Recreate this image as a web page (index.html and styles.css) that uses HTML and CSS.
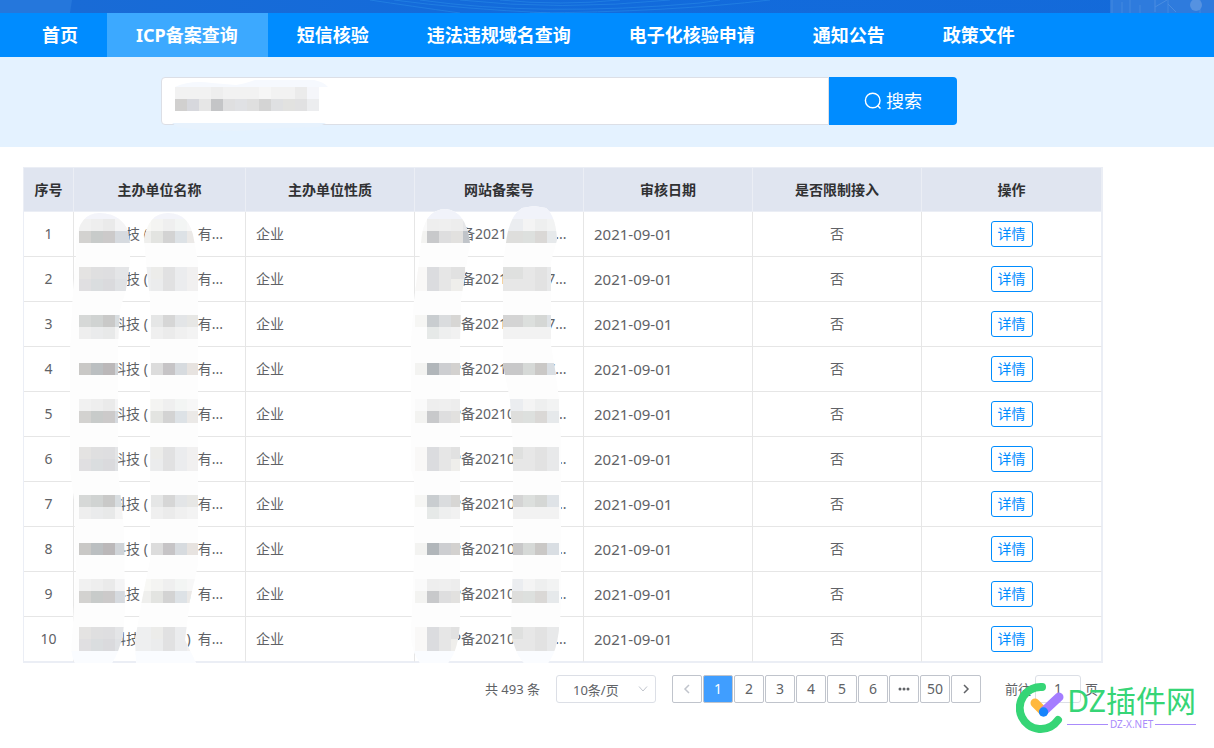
FILE: index.html
```html
<!DOCTYPE html>
<html lang="zh-CN">
<head>
<meta charset="utf-8">
<title>ICP备案查询</title>
<link rel="stylesheet" href="styles.css">
</head>
<body>
<header>
  <div class="banner">
    <svg class="banner-left" width="72" height="13" aria-hidden="true"><path d="M0 0H72L70 13H0Z" fill="#2577dc"/></svg>
    <svg class="banner-waves" width="420" height="13" aria-hidden="true"><g fill="none" stroke="#2a8de8" stroke-opacity=".55"><path d="M0 0Q40 6 90 13"/><path d="M24 0Q90 9 180 13"/><path d="M50 0Q170 17 330 3L350 0"/><path d="M90 0Q190 11 300 0"/><path d="M160 13Q300 12 400 0"/><path d="M130 0Q190 6 250 0"/></g></svg>
    <svg class="banner-right" width="104" height="13" aria-hidden="true"><rect width="104" height="13" fill="#2e7bdd"/><path d="M2 0V13M12 2V13M20 0V13M30 5V13M58 0V13M90 0V13" stroke="#5292e3" stroke-opacity=".6"/><path d="M45 0V12M45 7L57 0M58 4L66 12" stroke="#4a8de1" fill="none"/><circle cx="86" cy="5" r="6" fill="#5592e1"/></svg>
  </div>
  <nav class="nav">
    <a href="#">首页</a>
    <a href="#" class="active" aria-current="page">ICP备案查询</a>
    <a href="#">短信核验</a>
    <a href="#">违法违规域名查询</a>
    <a href="#">电子化核验申请</a>
    <a href="#">通知公告</a>
    <a href="#">政策文件</a>
  </nav>
</header>
<main>
  <form class="search">
    <div class="search-field">
      <input type="text" aria-label="查询内容">
      <svg class="mask search-mask" viewBox="161 77 168 54" width="168" height="54" aria-hidden="true">
        <path d="M175 87Q190 80 212 83L236 85Q244 84 255 80H314Q324 82 328 87Z" fill="#f6f9fe"/>
        <path d="M172 123H326L318 127L280 128L240 131L200 130L177 127Z" fill="#e7f2fd"/>
        <g shape-rendering="crispEdges">
          <path d="M175 87h144v12h-144z" fill="#f2f2f2"/><path d="M211 87h12v12h-12z" fill="#eee"/><path d="M259 87h12v12h-12z" fill="#f6f6f6"/><path d="M295 87h12v12h-12z" fill="#ebebeb"/><path d="M307 87h12v12h-12z" fill="#f5f6fa"/>
          <path d="M175 99h12v12h-12z" fill="#d1d0cf"/><path d="M187 99h12v12h-12z" fill="#d7d8dd"/><path d="M199 99h12v12h-12z" fill="#e6e6e6"/><path d="M211 99h12v12h-12z" fill="#c4c5c7"/><path d="M223 99h12v12h-12z" fill="#dfdfe0"/><path d="M235 99h12v12h-12z" fill="#e0e1e4"/><path d="M247 99h12v12h-12z" fill="#dfdfdf"/><path d="M259 99h12v12h-12z" fill="#d4d4d4"/><path d="M271 99h12v12h-12z" fill="#dfe0e2"/><path d="M283 99h12v12h-12z" fill="#e2e2e0"/><path d="M295 99h12v12h-12z" fill="#e1e1e2"/><path d="M307 99h12v12h-12z" fill="#ecedef"/>
        </g>
      </svg>
    </div>
    <button type="submit" class="search-btn">
      <svg width="18" height="18" viewBox="0 0 18 18" fill="none" stroke="#fff" stroke-width="1.4" aria-hidden="true"><circle cx="8.700" cy="8.500" r="7.300"/><path d="M13.500 13.500L16.500 16.500"/></svg>
      搜索
    </button>
  </form>

  <section class="results">
    <table>
      <colgroup><col class="c-no"><col class="c-name"><col><col><col><col><col class="c-op"></colgroup>
      <thead>
        <tr><th>序号</th><th>主办单位名称</th><th>主办单位性质</th><th>网站备案号</th><th>审核日期</th><th>是否限制接入</th><th>操作</th></tr>
      </thead>
      <tbody>
        <tr><td class="center">1</td>
          <td class="masked">　　科技&nbsp;(　　&ensp;&nbsp;)&ensp;有...
            <svg class="mask name-mask" viewBox="64 206 150 460" width="150" height="460" aria-hidden="true">
              <defs>
                <clipPath id="n1"><path d="M76 240Q80 213 99 213Q118 213 127 228L130 243V262Q128 275 126 290L120 310L118 345V470L121 500L124 530L125 610L123 635Q118 655 112 663H75Q70 655 72 640L76 570L74 500L70 470V350L73 290L76 255Z"/></clipPath>
                <clipPath id="n2"><path d="M144 240Q148 213 168 213Q190 213 194 240L198 262V565L190 600L185 640L196 663H136L135 640L142 600L150 560V300L146 262Z"/></clipPath>
                <g id="p1">
                  <path d="M79 219h12v12h-12z" fill="#f1f1f1"/><path d="M91 219h12v12h-12z" fill="#eee"/><path d="M103 219h12v12h-12z" fill="#eaeaea"/><path d="M115 219h16v12h-16z" fill="#f4f4f5"/>
                  <path d="M79 231h12v12h-12z" fill="#d3d2d0"/><path d="M91 231h12v12h-12z" fill="#c8cbca"/><path d="M103 231h12v12h-12z" fill="#cccaca"/><path d="M115 231h16v12h-16z" fill="#d6dadf"/>
                  <path d="M79 267h12v12h-12z" fill="#e4e3e2"/><path d="M91 267h12v12h-12z" fill="#dfdfe0"/><path d="M103 267h12v12h-12z" fill="#dedee0"/><path d="M115 267h16v12h-16z" fill="#e4e5e7"/>
                  <path d="M79 279h12v12h-12z" fill="#e0dfe1"/><path d="M91 279h12v12h-12z" fill="#dadddf"/><path d="M103 279h12v12h-12z" fill="#dadadd"/><path d="M115 279h16v12h-16z" fill="#e0e2e5"/>
                  <path d="M79 315h12v12h-12z" fill="#d6d8d7"/><path d="M91 315h12v12h-12z" fill="#d0d3d2"/><path d="M103 315h12v12h-12z" fill="#c9c9c8"/><path d="M115 315h16v12h-16z" fill="#d8dde0"/>
                  <path d="M79 327h12v12h-12z" fill="#eee"/><path d="M91 327h12v12h-12z" fill="#eaebec"/><path d="M103 327h12v12h-12z" fill="#e8e9e9"/><path d="M115 327h16v12h-16z" fill="#f4f4f4"/>
                  <path d="M79 363h12v12h-12z" fill="#c9c8c6"/><path d="M91 363h12v12h-12z" fill="#bbbfc1"/><path d="M103 363h12v12h-12z" fill="#bbb8b9"/><path d="M115 363h16v12h-16z" fill="#d0d4d8"/>
                </g>
                <g id="p2">
                  <path d="M135 219h16v12h-16z" fill="#f8f8f5"/><path d="M151 219h12v12h-12z" fill="#f4f4f2"/><path d="M163 219h12v12h-12z" fill="#efefef"/><path d="M175 219h12v12h-12z" fill="#f3f5f4"/><path d="M187 219h12v12h-12z" fill="#f7f7f7"/>
                  <path d="M135 231h16v12h-16z" fill="#efefed"/><path d="M151 231h12v12h-12z" fill="#e3e4e1"/><path d="M163 231h12v12h-12z" fill="#d3d3d3"/><path d="M175 231h12v12h-12z" fill="#dde2e6"/><path d="M187 231h12v12h-12z" fill="#ebe9e7"/>
                  <path d="M135 267h16v24h-16z" fill="#eeeff0"/><path d="M151 267h12v12h-12z" fill="#ececea"/><path d="M163 267h12v24h-12z" fill="#e1e1e2"/><path d="M175 267h12v24h-12z" fill="#ebecee"/><path d="M187 267h12v24h-12z" fill="#f1f0f0"/><path d="M151 279h12v12h-12z" fill="#ebeced"/>
                  <path d="M151 315h12v12h-12z" fill="#e5e6e6"/><path d="M163 315h12v12h-12z" fill="#d6d6d6"/><path d="M175 315h12v12h-12z" fill="#e3e5e7"/><path d="M187 315h12v12h-12z" fill="#e7e7e5"/>
                  <path d="M151 327h12v12h-12z" fill="#efefef"/><path d="M163 327h12v12h-12z" fill="#ebebeb"/><path d="M175 327h12v12h-12z" fill="#f0f0f0"/><path d="M187 327h12v12h-12z" fill="#f3f3f3"/>
                  <path d="M151 363h12v12h-12z" fill="#dcdcdc"/><path d="M163 363h12v12h-12z" fill="#c6c4c6"/><path d="M175 363h12v12h-12z" fill="#d7dbdf"/><path d="M187 363h12v12h-12z" fill="#e7e3e0"/>
                </g>
              </defs>
              <g clip-path="url(#n1)"><path d="M64 206h150v460h-150z" fill="#fdfdfd"/><path d="M64 206h150v13h-150z" fill="#f3f4fa"/><path d="M64 651h150v15h-150z" fill="#fafcff"/><use href="#p1"/><use href="#p1" y="180"/><use href="#p1" y="360"/></g>
              <g clip-path="url(#n2)"><path d="M64 206h150v460h-150z" fill="#fdfdfd"/><path d="M64 206h150v13h-150z" fill="#f3f4fa"/><path d="M64 651h150v15h-150z" fill="#fafcff"/><use href="#p2"/><use href="#p2" y="180"/><use href="#p2" y="360"/></g>
            </svg>
          </td>
          <td>企业</td>
          <td class="masked">　ICP备2021&#8199;&#8199;&#8199;&#8199;&#8199;&#8199;...
            <svg class="mask number-mask" viewBox="405 200 160 466" width="160" height="466" aria-hidden="true">
              <defs>
                <clipPath id="n3"><path d="M421 243Q423 209 446 209Q466 211 470 243L467 262L461 300L460 345V620Q459 650 448 663H420Q410 650 411 630L414 560V480L411 470V340L414 300L419 262Z"/></clipPath>
                <clipPath id="n4"><path d="M506 243Q509 216 522 208L534 206L546 208Q556 216 557 240L551 262V345L556 375L559 400L561 440V600Q560 650 548 663H524Q512 650 511 625L513 560V450L510 400L503 365V262Z"/></clipPath>
                <g id="p3">
                  <path d="M415 219h12v12h-12z" fill="#fafafa"/><path d="M427 219h12v12h-12z" fill="#eee"/><path d="M439 219h12v12h-12z" fill="#efefef"/><path d="M451 219h12v12h-12z" fill="#ededed"/><path d="M463 219h8v12h-8z" fill="#e5e6e8"/>
                  <path d="M415 231h12v12h-12z" fill="#f3f3f1"/><path d="M427 231h12v12h-12z" fill="#c8c9cb"/><path d="M439 231h12v12h-12z" fill="#dededf"/><path d="M451 231h12v12h-12z" fill="#e2e1df"/><path d="M463 231h8v12h-8z" fill="#c0c4c9"/>
                  <path d="M415 267h12v24h-12z" fill="#f9f8f7"/><path d="M427 267h12v24h-12z" fill="#dbdcdf"/><path d="M439 267h12v24h-12z" fill="#e6e6e6"/><path d="M451 267h14v12h-14z" fill="#e1e1e1"/><path d="M451 279h14v12h-14z" fill="#efeeeb"/>
                  <path d="M415 315h12v12h-12z" fill="#f6f6f4"/><path d="M427 315h12v12h-12z" fill="#c9cdd0"/><path d="M439 315h12v12h-12z" fill="#dadcde"/><path d="M451 315h12v12h-12z" fill="#d7d6d4"/>
                  <path d="M427 327h12v12h-12z" fill="#e6e9e8"/><path d="M439 327h12v12h-12z" fill="#eeefef"/><path d="M451 327h12v12h-12z" fill="#f1f1f1"/>
                  <path d="M415 363h12v12h-12z" fill="#f3f3f1"/><path d="M427 363h12v12h-12z" fill="#b1b6ba"/><path d="M439 363h12v12h-12z" fill="#cdced1"/><path d="M451 363h12v12h-12z" fill="#d3d1cf"/>
                </g>
                <g id="p4">
                  <path d="M503 219h20v12h-20z" fill="#ebedf0"/><path d="M523 219h12v12h-12z" fill="#f4f4f4"/><path d="M535 219h12v12h-12z" fill="#eeefef"/><path d="M547 219h12v12h-12z" fill="#f2f3f3"/>
                  <path d="M503 231h20v12h-20z" fill="#dededc"/><path d="M523 231h12v12h-12z" fill="#dde0de"/><path d="M535 231h12v12h-12z" fill="#dad8d6"/><path d="M547 231h12v12h-12z" fill="#e6e9eb"/>
                  <path d="M503 267h20v12h-20z" fill="#dfe0df"/><path d="M523 267h12v24h-12z" fill="#e7e7e7"/><path d="M535 267h12v24h-12z" fill="#e2e2e2"/><path d="M547 267h12v24h-12z" fill="#e8e9ea"/><path d="M503 279h20v12h-20z" fill="#e7e7e7"/>
                  <path d="M503 315h20v12h-20z" fill="#d4d4d4"/><path d="M523 315h12v12h-12z" fill="#dcdfdd"/><path d="M535 315h12v12h-12z" fill="#d5d7d5"/><path d="M547 315h12v12h-12z" fill="#dfe3e7"/>
                  <path d="M503 327h56v12h-56z" fill="#f2f2f2"/>
                  <path d="M503 363h20v12h-20z" fill="#c8c8c9"/><path d="M523 363h12v12h-12z" fill="#d6d9d7"/><path d="M535 363h12v12h-12z" fill="#cac8c6"/><path d="M547 363h12v12h-12z" fill="#d9dee3"/>
                </g>
              </defs>
              <g clip-path="url(#n3)"><path d="M405 200h160v466h-160z" fill="#fdfdfd"/><path d="M405 200h160v19h-160z" fill="#f1f3fa"/><path d="M405 651h160v15h-160z" fill="#fafcff"/><use href="#p3"/><use href="#p3" y="180"/><use href="#p3" y="360"/></g>
              <g clip-path="url(#n4)"><path d="M405 200h160v466h-160z" fill="#fdfdfd"/><path d="M405 200h160v19h-160z" fill="#f1f3fa"/><path d="M405 651h160v15h-160z" fill="#fafcff"/><use href="#p4"/><use href="#p4" y="180"/><use href="#p4" y="360"/></g>
            </svg>
          </td>
          <td class="date">2021-09-01</td><td class="center">否</td><td class="center"><button class="detail">详情</button></td></tr>
        <tr><td class="center">2</td><td>　　科技&nbsp;(　　&ensp;&nbsp;)&ensp;有...</td><td>企业</td><td>　ICP备2021&#8199;&#8199;&#8199;&#8199;&#8199;7...</td><td class="date">2021-09-01</td><td class="center">否</td><td class="center"><button class="detail">详情</button></td></tr>
        <tr><td class="center">3</td><td>　　科技&nbsp;(　　&ensp;&nbsp;)&ensp;有...</td><td>企业</td><td>　ICP备2021&#8199;&#8199;&#8199;&#8199;&#8199;7...</td><td class="date">2021-09-01</td><td class="center">否</td><td class="center"><button class="detail">详情</button></td></tr>
        <tr><td class="center">4</td><td>　　科技&nbsp;(　　&ensp;&nbsp;)&ensp;有...</td><td>企业</td><td>　ICP备2021&#8199;&#8199;&#8199;&#8199;&#8199;7...</td><td class="date">2021-09-01</td><td class="center">否</td><td class="center"><button class="detail">详情</button></td></tr>
        <tr><td class="center">5</td><td>　　科技&nbsp;(　　&ensp;&nbsp;)&ensp;有...</td><td>企业</td><td>　ICP备20210&#8199;&#8199;&#8199;&#8199;&#8199;...</td><td class="date">2021-09-01</td><td class="center">否</td><td class="center"><button class="detail">详情</button></td></tr>
        <tr><td class="center">6</td><td>　　科技&nbsp;(　　&ensp;&nbsp;)&ensp;有...</td><td>企业</td><td>　ICP备20210&#8199;&#8199;&#8199;&#8199;&#8199;...</td><td class="date">2021-09-01</td><td class="center">否</td><td class="center"><button class="detail">详情</button></td></tr>
        <tr><td class="center">7</td><td>　　科技&nbsp;(　　&ensp;&nbsp;)&ensp;有...</td><td>企业</td><td>　ICP备20210&#8199;&#8199;&#8199;&#8199;&#8199;...</td><td class="date">2021-09-01</td><td class="center">否</td><td class="center"><button class="detail">详情</button></td></tr>
        <tr><td class="center">8</td><td>　　科技&nbsp;(　　&ensp;&nbsp;)&ensp;有...</td><td>企业</td><td>　ICP备20210&#8199;&#8199;&#8199;&#8199;&#8199;...</td><td class="date">2021-09-01</td><td class="center">否</td><td class="center"><button class="detail">详情</button></td></tr>
        <tr><td class="center">9</td><td>　　科技&nbsp;(　　&ensp;&nbsp;)&ensp;有...</td><td>企业</td><td>　ICP备20210&#8199;&#8199;&#8199;&#8199;&#8199;...</td><td class="date">2021-09-01</td><td class="center">否</td><td class="center"><button class="detail">详情</button></td></tr>
        <tr><td class="center">10</td><td>　　科技&nbsp;(　　&ensp;&nbsp;)&ensp;有...</td><td>企业</td><td>　ICP备20210&#8199;&#8199;&#8199;&#8199;&#8199;...</td><td class="date">2021-09-01</td><td class="center">否</td><td class="center"><button class="detail">详情</button></td></tr>
      </tbody>
    </table>

    <div class="pagination">
      <span>共 493 条</span>
      <div class="size">
        <select aria-label="每页条数"><option>10条/页</option></select>
        <svg class="caret" width="10" height="6" viewBox="0 0 10 6" fill="none" stroke="#c0c4cc" aria-hidden="true"><path d="M1 .5L5 5L9 .5"/></svg>
      </div>
      <div class="pager">
        <button disabled aria-label="上一页"><svg width="8" height="10" viewBox="0 0 8 10" fill="none" stroke="#c0c4cc" stroke-width="1.500"><path d="M6 1L2 5L6 9"/></svg></button>
        <button class="current">1</button>
        <button>2</button>
        <button>3</button>
        <button>4</button>
        <button>5</button>
        <button>6</button>
        <button aria-label="更多"><svg width="12" height="4" viewBox="0 0 12 4" fill="#606266"><circle cx="2" cy="2" r="1.500"/><circle cx="6" cy="2" r="1.500"/><circle cx="10" cy="2" r="1.500"/></svg></button>
        <button>50</button>
        <button aria-label="下一页"><svg width="8" height="10" viewBox="0 0 8 10" fill="none" stroke="#606266" stroke-width="1.500"><path d="M2 1L6 5L2 9"/></svg></button>
      </div>
      <label class="jump">前往 <input type="text" value="1"> 页</label>
    </div>
  </section>
</main>

<aside class="brand">
  <svg width="50" height="52" viewBox="0 0 50 52" fill="none" stroke-linecap="round" aria-hidden="true">
    <path d="M26 5A21 21 0 1 0 42 38" stroke="#36d576" stroke-width="8"/>
    <path d="M19 21L27 29" stroke="#ffb83d" stroke-width="9"/>
    <path d="M28 29L43 15" stroke="#a47dff" stroke-width="9"/>
    <circle cx="27.500" cy="30" r="4.700" fill="#1684fc"/>
  </svg>
  <div class="brand-text">
    <span class="brand-name">DZ插件网</span>
    <span class="brand-url">DZ-X.NET</span>
  </div>
</aside>
</body>
</html>
```
FILE: styles.css
```css
* {
  box-sizing: border-box;
}

body {
  position: relative;
  min-height: 100vh;
  margin: 0;
  background: #fff;
  color: #606266;
  font: 14px/20px "Noto Sans", "Noto Sans CJK SC", sans-serif;
}

button,
input,
select {
  margin: 0;
  font: inherit;
  color: inherit;
}

.banner {
  position: relative;
  height: 13px;
  overflow: hidden;
  background: linear-gradient(90deg, #1a6bd5, #126bdc 50%, #146ad9);
}

.banner svg {
  position: absolute;
  top: 0;
}

.banner-left {
  left: 0;
}

.banner-waves {
  left: 370px;
}

.banner-right {
  right: 0;
}

.nav {
  display: flex;
  height: 44px;
  padding-left: 13px;
  background: #008cff;
}

.nav a {
  padding: 0 29px;
  color: #fff;
  font-size: 18px;
  font-weight: 700;
  line-height: 44px;
  text-decoration: none;
  white-space: nowrap;
}

.nav .active {
  padding: 0 30px 0 29px;
  background: #3ca9ff;
}

.search {
  display: flex;
  padding: 20px 257px 22px 161px;
  background: #e4f2ff;
}

.search-field {
  position: relative;
  flex: 1;
}

.search-field input {
  display: block;
  width: 100%;
  height: 48px;
  padding: 0 14px;
  border: 1px solid #dcdfe6;
  border-radius: 4px 0 0 4px;
  background: #fff;
}

.search-btn {
  display: flex;
  align-items: center;
  justify-content: center;
  gap: 4px;
  width: 128px;
  height: 48px;
  border: 0;
  border-radius: 0 4px 4px 0;
  background: #008cff;
  color: #fff;
  font-size: 18px;
}

.mask {
  position: absolute;
  pointer-events: none;
}

.search-mask {
  top: 0;
  left: 0;
}

.name-mask {
  top: -6px;
  left: -10px;
}

.number-mask {
  top: -12px;
  left: -10px;
}

.results {
  padding: 20px 111px 0 23px;
}

table {
  width: 100%;
  table-layout: fixed;
  border: 1px solid #ebeef5;
  border-collapse: separate;
  border-spacing: 0;
}

.c-no {
  width: 50px;
}

.c-name {
  width: 172px;
}

.c-op {
  width: 180px;
}

th,
td {
  padding: 0 10px;
  border-right: 1px solid #e6e6e6;
  border-bottom: 1px solid #e6e6e6;
  white-space: nowrap;
}

th {
  height: 44px;
  border-color: #ebeef5;
  background: #e0e5f0;
  color: #303133;
  font-weight: 700;
}

td {
  height: 45px;
  text-align: left;
}

tr > :last-child {
  border-right-color: #ebeef5;
}

tr:last-child > td {
  border-bottom-color: #ebeef5;
}

th:first-child {
  padding: 0;
}

.masked {
  position: relative;
}

.center {
  text-align: center;
}

.date {
  font-size: 15px;
}

.detail {
  display: inline-block;
  width: 42px;
  height: 26px;
  padding: 0;
  border: 1px solid #008cff;
  border-radius: 3px;
  background: #fff;
  color: #008cff;
  vertical-align: middle;
}

.pagination {
  display: flex;
  align-items: center;
  justify-content: flex-end;
  padding: 12px 5px 16px 0;
  font-size: 13px;
  line-height: 28px;
  white-space: nowrap;
}

.size {
  position: relative;
  margin: 0 16px;
}

.size select {
  display: block;
  width: 100px;
  height: 28px;
  padding: 0 16px;
  border: 1px solid #dcdfe6;
  border-radius: 3px;
  appearance: none;
  background: #fff;
}

.caret {
  position: absolute;
  top: 11px;
  right: 8px;
}

.pager {
  display: flex;
  gap: 1px;
}

.pager button {
  display: flex;
  align-items: center;
  justify-content: center;
  width: 30px;
  height: 28px;
  padding: 0;
  border: 1px solid #c0c4cc;
  border-radius: 2px;
  background: #fff;
  font-size: 14px;
}

.pager .current {
  background: #409eff;
  color: #fff;
}

.jump {
  display: flex;
  gap: 4px;
  margin-left: 24px;
}

.jump input {
  width: 46px;
  height: 28px;
  padding: 0;
  border: 1px solid #dcdfe6;
  border-radius: 3px;
  text-align: center;
  font-size: 14px;
}

.brand {
  position: absolute;
  right: 18px;
  bottom: 14px;
  display: flex;
  gap: 1px;
}

.brand-text {
  display: flex;
  flex-direction: column;
}

.brand-name {
  color: #36d576;
  font-size: 30px;
  line-height: 38px;
}

.brand-url {
  display: flex;
  align-items: center;
  gap: 2px;
  color: #a98bfb;
  font-size: 10px;
  line-height: 8px;
}

.brand-url::before,
.brand-url::after {
  content: "";
  flex: 1;
  height: 1px;
  background: #a98bfb;
}
```
